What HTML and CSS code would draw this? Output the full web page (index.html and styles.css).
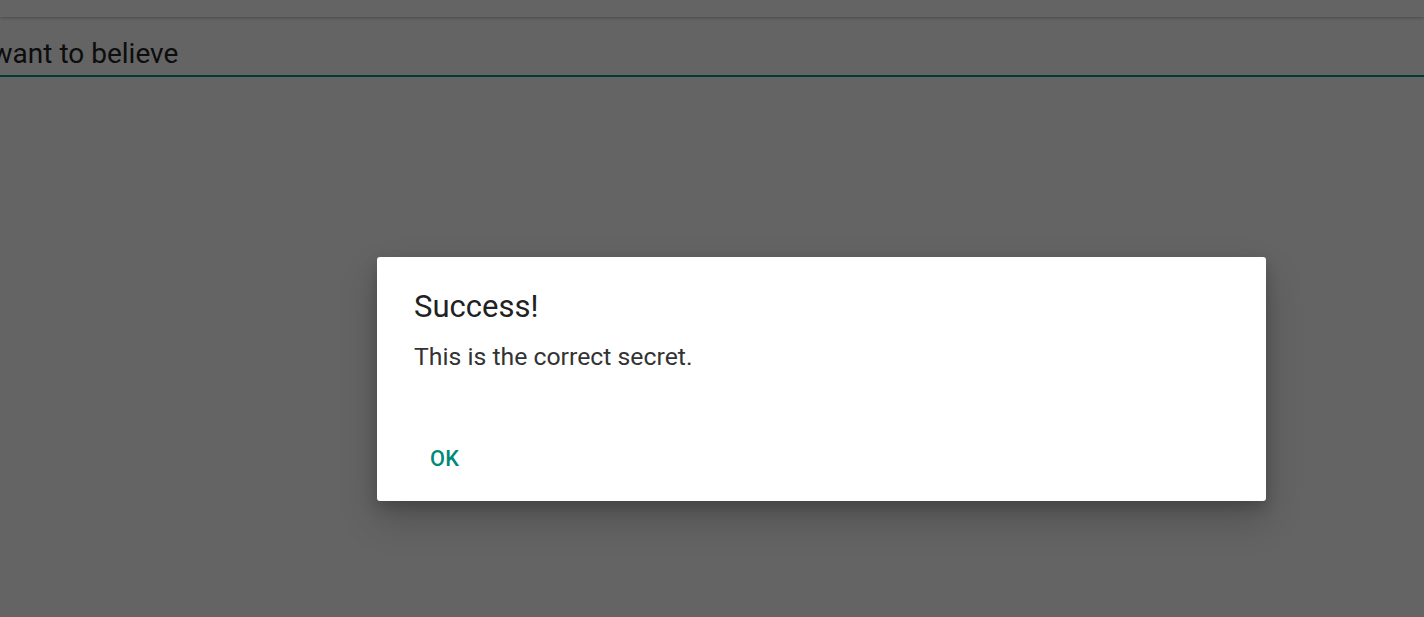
FILE: index.html
```html
<!DOCTYPE html>
<html>
<head>
<meta charset="utf-8">
<link rel="stylesheet" href="styles.css">
</head>
<body>
<div class="screen">
  <div class="appbar"></div>
  <div class="field">
    <div class="field-text">I want to believe</div>
  </div>
  <div class="scrim">
    <div class="dialog">
      <div class="title">Success!</div>
      <div class="message">This is the correct secret.</div>
      <div class="actions">
        <button class="btn">OK</button>
      </div>
    </div>
  </div>
</div>
</body>
</html>
```
FILE: styles.css
```css
html, body {
  margin: 0;
  padding: 0;
  width: 1424px;
  height: 617px;
  overflow: hidden;
  font-family: Roboto, "Noto Sans", sans-serif;
}
.screen {
  position: relative;
  width: 1424px;
  height: 617px;
  background: #fafafa;
  overflow: hidden;
}
.appbar {
  height: 17px;
  background: #fafafa;
  box-shadow: 0 1px 3px rgba(0,0,0,0.25);
}
.field {
  height: 58px;
  border-bottom: 2px solid #009688;
  overflow: hidden;
  display: flex;
  align-items: flex-end;
}
.field-text {
  font-size: 28px;
  color: #222;
  margin-left: -23px;
  white-space: nowrap;
  line-height: 1;
  padding-bottom: 7px;
}
.scrim {
  position: absolute;
  inset: 0;
  background: rgba(0,0,0,0.6);
  display: flex;
  justify-content: flex-start;
  align-items: flex-start;
  padding-top: 257px;
  padding-left: 377px;
}
.dialog {
  width: 889px;
  height: 244px;
  box-sizing: border-box;
  background: #fff;
  border-radius: 3px;
  box-shadow: 0 18px 38px rgba(0,0,0,0.2), 0 6px 14px rgba(0,0,0,0.18);
  padding: 32px 36px 0 37px;
  display: flex;
  flex-direction: column;
}
.title {
  font-size: 31px;
  color: #212121;
  line-height: 36px;
}
.message {
  margin-top: 17px;
  font-size: 24.8px;
  color: #333;
  line-height: 30px;
}
.actions {
  margin-top: 74px;
  display: flex;
}
.btn {
  border: none;
  background: none;
  font-family: Roboto, sans-serif;
  font-weight: 500;
  font-size: 21.7px;
  line-height: 26px;
  color: #00897b;
  padding: 0 0 0 16px;
  letter-spacing: 0.3px;
}
```
